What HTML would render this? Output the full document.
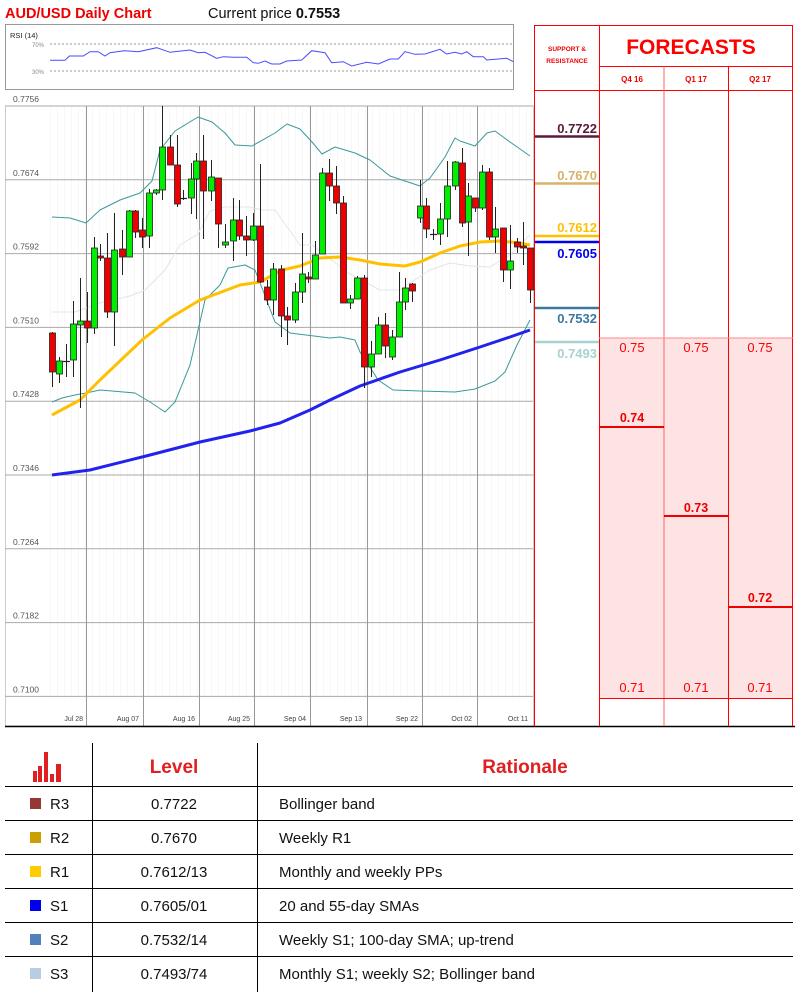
<!DOCTYPE html>
<html><head><meta charset="utf-8"><style>
html,body{margin:0;padding:0;background:#fff;}
svg{display:block;font-family:"Liberation Sans",sans-serif;}
</style></head><body>
<svg id="s" width="801" height="995" viewBox="0 0 801 995" xmlns="http://www.w3.org/2000/svg">
<rect width="801" height="995" fill="#fff"/>
<text x="5" y="18" font-size="14.5" font-weight="bold" fill="#e00">AUD/USD Daily Chart</text>
<text x="208" y="18" font-size="14.5" fill="#111">Current price <tspan font-weight="bold">0.7553</tspan></text>
<!-- RSI box -->
<rect x="5.5" y="24.5" width="508" height="65" fill="#fff" stroke="#999"/>
<text x="10" y="38" font-size="7.5" fill="#222">RSI (14)</text>
<text x="32" y="47" font-size="6" fill="#888">70%</text>
<text x="32" y="74" font-size="6" fill="#888">30%</text>
<line x1="50" y1="44" x2="513" y2="44" stroke="#777" stroke-dasharray="2,2" stroke-width="0.8"/>
<line x1="50" y1="71" x2="513" y2="71" stroke="#777" stroke-dasharray="2,2" stroke-width="0.8"/>
<polyline id="rsi" fill="none" stroke="#4a4aff" stroke-width="1"/>
<!-- chart -->
<g id="grid"></g>
<g id="lines"></g>
<g id="cand"></g>
<line x1="5" y1="726.5" x2="795" y2="726.5" stroke="#000" stroke-width="1.5"/>
<!-- right panel -->
<rect x="599.5" y="338" width="193" height="360" fill="#fde3e4"/>
<g stroke="#f00" fill="none" stroke-width="1">
<line x1="534.5" y1="25" x2="534.5" y2="726"/>
<line x1="599.5" y1="25" x2="599.5" y2="726"/>
<line x1="792.5" y1="25" x2="792.5" y2="726"/>
<line x1="534" y1="25.5" x2="793" y2="25.5"/>
<line x1="599" y1="66.5" x2="793" y2="66.5"/>
<line x1="534" y1="90.5" x2="793" y2="90.5"/>
<line x1="664" y1="66" x2="664" y2="726" stroke="#f66"/>
<line x1="728.5" y1="66" x2="728.5" y2="726"/>
<line x1="599" y1="338" x2="793" y2="338" stroke="#f88"/>
<line x1="599" y1="698.5" x2="793" y2="698.5"/>
</g>
<text x="567" y="51" font-size="6.5" font-weight="bold" fill="#e00" text-anchor="middle">SUPPORT &amp;</text>
<text x="567" y="63" font-size="6.5" font-weight="bold" fill="#e00" text-anchor="middle">RESISTANCE</text>
<text x="691" y="54" font-size="21" font-weight="bold" fill="#f00" text-anchor="middle">FORECASTS</text>
<text x="632" y="82" font-size="8" font-weight="bold" fill="#e00" text-anchor="middle">Q4 16</text>
<text x="696" y="82" font-size="8" font-weight="bold" fill="#e00" text-anchor="middle">Q1 17</text>
<text x="760" y="82" font-size="8" font-weight="bold" fill="#e00" text-anchor="middle">Q2 17</text>
<g font-size="13" font-weight="bold" text-anchor="end">
<text x="597" y="133" fill="#5a1a3a">0.7722</text>
<text x="597" y="180" fill="#d8b26a">0.7670</text>
<text x="597" y="232" fill="#ffc000">0.7612</text>
<text x="597" y="258" fill="#0000ee">0.7605</text>
<text x="597" y="323" fill="#3a78a0">0.7532</text>
<text x="597" y="358" fill="#a8d2d2">0.7493</text>
</g>
<g stroke-width="2.5">
<line x1="535" y1="136.5" x2="599" y2="136.5" stroke="#5a1a3a"/>
<line x1="535" y1="183.5" x2="599" y2="183.5" stroke="#d8b26a"/>
<line x1="535" y1="236" x2="599" y2="236" stroke="#ffc000"/>
<line x1="535" y1="242" x2="599" y2="242" stroke="#0000ee"/>
<line x1="535" y1="308" x2="599" y2="308" stroke="#3a78a0"/>
<line x1="535" y1="342" x2="599" y2="342" stroke="#a8d2d2"/>
</g>
<g font-size="13" fill="#f00" text-anchor="middle">
<text x="632" y="352">0.75</text><text x="696" y="352">0.75</text><text x="760" y="352">0.75</text>
<text x="632" y="692">0.71</text><text x="696" y="692">0.71</text><text x="760" y="692">0.71</text>
</g>
<g font-size="12.5" font-weight="bold" fill="#e00" text-anchor="middle">
<text x="632" y="422">0.74</text><text x="696" y="512">0.73</text><text x="760" y="602">0.72</text>
</g>
<g stroke="#e00" stroke-width="2">
<line x1="599" y1="427" x2="664" y2="427"/><line x1="664" y1="516" x2="728" y2="516"/><line x1="728" y1="607" x2="792" y2="607"/>
</g>
<!-- bottom table -->
<g stroke="#000" stroke-width="1">
<line x1="92.5" y1="743" x2="92.5" y2="992"/>
<line x1="257.5" y1="743" x2="257.5" y2="992"/>
<line x1="5" y1="786.5" x2="793" y2="786.5"/>
<line x1="5" y1="820.5" x2="793" y2="820.5"/>
<line x1="5" y1="854.5" x2="793" y2="854.5"/>
<line x1="5" y1="888.5" x2="793" y2="888.5"/>
<line x1="5" y1="922.5" x2="793" y2="922.5"/>
<line x1="5" y1="956.5" x2="793" y2="956.5"/>
</g>
<g fill="#e02020">
<rect x="33" y="771" width="4" height="11"/><rect x="38" y="766" width="4" height="16"/><rect x="44" y="752" width="4" height="30"/><rect x="50" y="774" width="4" height="8"/><rect x="56" y="764" width="5" height="18"/>
</g>
<text x="174" y="773" font-size="19" font-weight="bold" fill="#e02020" text-anchor="middle">Level</text>
<text x="525" y="773" font-size="19" font-weight="bold" fill="#e02020" text-anchor="middle">Rationale</text>
<g font-size="15" fill="#111">
<rect x="30" y="798" width="11" height="11" fill="#953735"/><text x="50" y="809">R3</text><text x="174" y="809" text-anchor="middle">0.7722</text><text x="279" y="809">Bollinger band</text>
<rect x="30" y="832" width="11" height="11" fill="#c9a000"/><text x="50" y="843">R2</text><text x="174" y="843" text-anchor="middle">0.7670</text><text x="279" y="843">Weekly R1</text>
<rect x="30" y="866" width="11" height="11" fill="#ffcc00"/><text x="50" y="877">R1</text><text x="174" y="877" text-anchor="middle">0.7612/13</text><text x="279" y="877">Monthly and weekly PPs</text>
<rect x="30" y="900" width="11" height="11" fill="#0000ee"/><text x="50" y="911">S1</text><text x="174" y="911" text-anchor="middle">0.7605/01</text><text x="279" y="911">20 and 55-day SMAs</text>
<rect x="30" y="934" width="11" height="11" fill="#4f81bd"/><text x="50" y="945">S2</text><text x="174" y="945" text-anchor="middle">0.7532/14</text><text x="279" y="945">Weekly S1; 100-day SMA; up-trend</text>
<rect x="30" y="968" width="11" height="11" fill="#b8cce4"/><text x="50" y="979">S3</text><text x="174" y="979" text-anchor="middle">0.7493/74</text><text x="279" y="979">Monthly S1; weekly S2; Bollinger band</text>
</g>
</svg>
<script>
var NS="http://www.w3.org/2000/svg";
function el(p,t,a,txt){var e=document.createElementNS(NS,t);for(var k in a)e.setAttribute(k,a[k]);if(txt)e.textContent=txt;p.appendChild(e);return e;}
var g=document.getElementById('grid');
el(g,'rect',{x:5.5,y:106,width:528,height:620,fill:'#fff',stroke:'#ccc'});
for(var x=50;x<533;x+=7)el(g,'line',{x1:x+.5,y1:106,x2:x+.5,y2:698,stroke:'#f7f7f7'});
var labs=["0.7756","0.7674","0.7592","0.7510","0.7428","0.7346","0.7264","0.7182","0.7100"];
for(var i=0;i<9;i++){var y=106+i*73.8;
 if(i>0)el(g,'line',{x1:5,y1:y,x2:533,y2:y,stroke:'#aaa'});
 el(g,'text',{x:13,y:y-4,'font-size':8.5,fill:'#555'},labs[i]);}
el(g,'line',{x1:5,y1:106,x2:533,y2:106,stroke:'#aaa'});
var vx=[86,143,199,254,310,367,422,477],dl=["Jul 28","Aug 07","Aug 16","Aug 25","Sep 04","Sep 13","Sep 22","Oct 02","Oct 11"];
vx.forEach(function(x){el(g,'line',{x1:x+.5,y1:106,x2:x+.5,y2:726,stroke:'#999'});});
var lx=[83,139,195,250,306,362,418,472,528];
dl.forEach(function(t,i){el(g,'text',{x:lx[i],y:721,'font-size':7,fill:'#444','text-anchor':'end'},t);});
function pl(p,pts,c,w){el(document.getElementById('lines'),'polyline',{points:pts,fill:'none',stroke:c,'stroke-width':w,'stroke-linejoin':'round'});}
pl(0,"52,312 75,312 100,303 130,296 145,290 165,270 180,245 198,234 210,211 225,207 250,207 262,210 275,210 300,245 312,245 350,274 380,290 400,290 410,283 430,270 450,263 470,266 490,267 510,255 530,235","#e4e4e4",1);
pl(0,"52,217 70,218 86,223 100,210 120,200 140,193 152,181 160,150 175,131 198,117 212,122 225,133 235,145 252,146 275,133 287,124 300,129 312,142 322,154 335,147 355,153 370,160 390,176 405,181 420,186 430,178 445,157 455,138 460,141 475,146 487,133 495,131 510,142 530,156","#3a9a9a",1);
pl(0,"52,402 62,398 75,395 86,393 100,390 135,393 150,402 165,412 175,402 190,365 205,300 220,285 228,268 245,265 255,270 262,288 275,322 290,333 330,338 340,337 355,340 360,352 370,367 378,380 393,390 420,391 455,392 475,389 495,381 505,372 517,345 530,320","#3a9a9a",1);
pl(0,"52,415 80,400 100,380 142,340 170,318 200,300 240,285 260,282 282,270 300,266 320,258 340,257 360,260 380,264 405,266 420,262 440,253 460,246 480,242 500,241 520,243 530,245","#ffc000",3);
pl(0,"52,475 90,470 150,455 200,442 250,431 280,423 310,410 330,400 360,386 400,372 440,360 480,347 510,337 530,330","#2222ee",3);
var C=[[52,333,372,332,387,0],[59,361,374,357,383,1],[66,361,362,344,377,2],[73,324,360,301,377,1],[80,321,325,278,408,1],[87,321,328,292,343,0],[94,248,328,237,334,1],[100,256,258,244,261,0],[107,258,312,233,318,0],[114,250,312,213,346,1],[122,249,257,230,275,0],[129,211,257,210,257,1],[135,211,232,210,238,0],[142,230,237,218,248,0],[149,193,236,189,248,1],[156,190,193,189,195,1],[162,147,190,106,200,1],[170,147,165,135,165,0],[177,165,204,135,207,0],[183,198,199,190,200,2],[191,179,198,163,214,1],[196,161,179,153,219,1],[203,161,191,135,239,0],[211,177,191,160,201,1],[218,178,224,178,248,0],[225,242,245,224,248,1],[233,220,241,198,261,1],[239,220,236,200,240,0],[246,236,240,216,256,0],[253,226,240,213,241,1],[260,226,282,164,283,0],[267,287,300,280,305,0],[273,269,300,263,315,1],[281,269,316,265,337,0],[287,316,320,307,345,0],[295,292,320,283,323,1],[302,274,292,233,303,1],[308,277,279,272,283,0],[315,255,279,241,279,1],[322,173,254,168,254,1],[329,173,186,159,201,0],[336,186,203,166,214,0],[343,203,303,196,303,0],[350,299,303,295,309,1],[357,278,299,276,299,1],[364,278,367,275,388,0],[371,354,367,341,377,1],[378,325,354,317,354,1],[385,325,346,313,358,0],[392,337,357,330,360,1],[399,302,337,272,337,1],[405,288,302,278,310,1],[412,284,291,283,302,0],[420,206,218,180,223,1],[426,206,229,198,238,0],[433,234,236,229,240,2],[440,219,234,203,245,1],[447,186,219,161,237,1],[455,162,186,161,190,1],[462,163,223,148,227,0],[468,196,222,183,256,1],[475,198,208,198,212,0],[482,172,208,165,210,1],[489,172,237,168,240,0],[495,229,237,207,253,1],[503,228,270,228,282,0],[510,261,270,225,289,1],[517,242,247,238,253,0],[523,246,248,222,265,0],[530,248,290,248,303,0]];
var cg=document.getElementById('cand');
C.forEach(function(c){
 el(cg,'line',{x1:c[0]+.5,y1:c[3],x2:c[0]+.5,y2:c[4],stroke:'#222','stroke-width':1});
 if(c[5]==2){el(cg,'line',{x1:c[0]-3,y1:c[1]+.5,x2:c[0]+4,y2:c[1]+.5,stroke:'#222','stroke-width':1.2});}
 else el(cg,'rect',{x:c[0]-2.5,y:c[1],width:6,height:Math.max(2,c[2]-c[1]),fill:c[5]?'#00ee00':'#ee0000',stroke:'#222','stroke-width':.8});
});
var R=[[150,181],[195,181],[208,168],[250,168],[270,155],[295,155],[315,168],[330,158],[372,152],[415,155],[470,143],[510,157],[570,150],[595,158],[615,157],[650,175],[670,170],[700,172],[740,172],[760,188],[775,190],[795,183],[815,192],[840,192],[860,183],[905,180],[935,152],[975,158],[995,188],[1030,185],[1055,198],[1100,187],[1135,192],[1170,177],[1195,177],[1215,155],[1245,163],[1275,162],[1320,148],[1340,162],[1365,157],[1385,162],[1400,155],[1420,170],[1450,170],[1460,180],[1520,175],[1540,185]];
document.getElementById('rsi').setAttribute('points',R.map(function(p){return (p[0]/3).toFixed(1)+','+(p[1]/3).toFixed(1);}).join(' '));
</script>
</body></html>
